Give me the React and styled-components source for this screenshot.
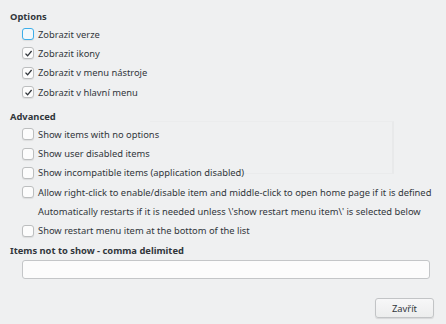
import styled, { createGlobalStyle } from 'styled-components';

const Global = createGlobalStyle`
  html, body {
    margin: 0;
    background: #eff0f1;
  }
  body {
    font-family: "Noto Sans", "DejaVu Sans", sans-serif;
    font-size: 9.35px;
    color: #31363b;
  }
`;

const Dialog = styled.div`
  position: relative;
  width: 446px;
  height: 324px;
  box-sizing: border-box;
  padding: 10px 12px 0 10px;
  display: flex;
  flex-direction: column;
`;

const Heading = styled.div`
  font-weight: bold;
  height: 14px;
  line-height: 14px;
  margin-bottom: ${p => p.$gap || 0}px;
`;

const List = styled.div`
  display: flex;
  flex-direction: column;
  padding-left: 12px;
  margin-bottom: ${p => p.$after || 0}px;
`;

const Row = styled.label`
  display: flex;
  align-items: center;
  gap: 4px;
  height: 19.3px;
  white-space: nowrap;
`;

const Note = styled.div`
  height: 19.3px;
  line-height: 19.3px;
  padding-left: 16px;
  white-space: nowrap;
`;

const Box = styled.span`
  width: 12px;
  height: 12px;
  box-sizing: border-box;
  border-radius: 3px;
  border: 1px solid ${p => (p.$focus ? '#3daee9' : '#bcbebf')};
  background: ${p => (p.$focus ? '#f3f8fb' : '#fcfcfc')};
  box-shadow: 0 1px 1px rgba(0, 0, 0, 0.08);
  display: flex;
  align-items: center;
  justify-content: center;
  flex-shrink: 0;
`;

const Check = () => (
  <svg width="9" height="9" viewBox="0 0 9 9">
    <path d="M1.5 4.6 L3.6 6.8 L7.6 2" fill="none" stroke="#31363b" strokeWidth="1.3" />
  </svg>
);

const Ghost = styled.div`
  position: absolute;
  left: 150px;
  top: 121px;
  width: 242px;
  height: 51px;
  border-top: 1px solid rgba(0, 0, 0, 0.015);
  border-right: 2px solid rgba(0, 0, 0, 0.022);
  border-bottom: 1px solid rgba(0, 0, 0, 0.018);
  pointer-events: none;
`;

const Field = styled.input`
  margin-left: 12px;
  width: 408px;
  height: 19px;
  box-sizing: border-box;
  border: 1px solid #c4c6c8;
  border-radius: 3px;
  background: #fcfcfc;
  outline: none;
`;

const Footer = styled.div`
  display: flex;
  justify-content: flex-end;
  padding-top: 19px;
`;

const Button = styled.button`
  width: 59px;
  height: 20px;
  font: inherit;
  color: #31363b;
  border: 1px solid #c2c4c6;
  border-radius: 3px;
  background: linear-gradient(#f7f7f8, #eceded);
  box-shadow: 0 1px 1px rgba(0, 0, 0, 0.1);
`;

const options = [
  { text: 'Zobrazit verze', focus: true },
  { text: 'Zobrazit ikony', checked: true },
  { text: 'Zobrazit v menu nástroje', checked: true },
  { text: 'Zobrazit v hlavní menu', checked: true },
];

const advanced = [
  'Show items with no options',
  'Show user disabled items',
  'Show incompatible items (application disabled)',
  'Allow right-click to enable/disable item and middle-click to open home page if it is defined',
];

export default function App() {
  return (
    <>
      <Global />
      <Dialog>
        <Heading $gap={0.5}>Options</Heading>
        <List $after={8}>
          {options.map(o => (
            <Row key={o.text}>
              <Box $focus={o.focus}>{o.checked && <Check />}</Box>
              {o.text}
            </Row>
          ))}
        </List>
        <Heading $gap={1}>Advanced</Heading>
        <List $after={4}>
          {advanced.map(t => (
            <Row key={t}>
              <Box />
              {t}
            </Row>
          ))}
          <Note>Automatically restarts if it is needed unless \'show restart menu item\' is selected below</Note>
          <Row>
            <Box />
            Show restart menu item at the bottom of the list
          </Row>
        </List>
        <Heading $gap={2}>Items not to show - comma delimited</Heading>
        <Field />
        <Footer>
          <Button>Zavřít</Button>
        </Footer>
        <Ghost />
      </Dialog>
    </>
  );
}
